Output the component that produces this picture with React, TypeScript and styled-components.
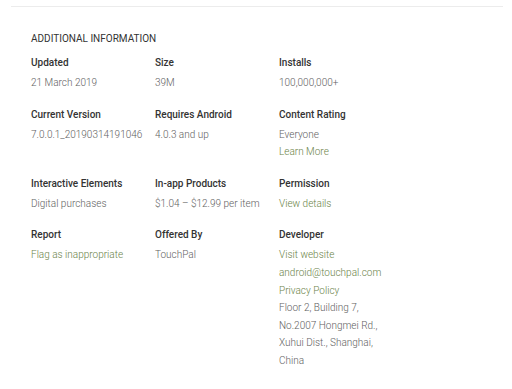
import styled, { createGlobalStyle } from "styled-components";

interface I_InfoItem {
    Label: string;
    Values: { Text: string; Link?: boolean }[];
}

const GlobalStyle = createGlobalStyle`
    body {
        margin: 0;
        background-color: #ffffff;
        font-family: Roboto, "Liberation Sans", Arial, sans-serif;
    }
`;

const Page = styled.div`
    padding: 6px 9px 0px 11px;
`;

const Section = styled.section`
    border-top: 1px solid #ececec;
    padding: 25px 20px 20px 20px;
`;

const Heading = styled.h2`
    margin: 0 0 10px 0;
    font-size: 10px;
    line-height: 14px;
    font-weight: 400;
    color: #333333;
    text-transform: uppercase;
`;

const InfoGrid = styled.div`
    display: grid;
    grid-template-columns: repeat(3, 124px);
    row-gap: 16px;
`;

const InfoCell = styled.div`
    display: flex;
    flex-direction: column;
`;

const Label = styled.div`
    font-size: 10px;
    line-height: 14px;
    font-weight: 500;
    color: #333333;
    margin-bottom: 4px;
`;

const Value = styled.div<{ $link?: boolean }>`
    font-size: 10px;
    line-height: 17.6px;
    font-weight: 300;
    color: ${(props) => (props.$link ? "#6b8348" : "#616161")};
    white-space: nowrap;
`;

const InfoItems: I_InfoItem[] = [
    { Label: "Updated", Values: [{ Text: "21 March 2019" }] },
    { Label: "Size", Values: [{ Text: "39M" }] },
    { Label: "Installs", Values: [{ Text: "100,000,000+" }] },
    { Label: "Current Version", Values: [{ Text: "7.0.0.1_20190314191046" }] },
    { Label: "Requires Android", Values: [{ Text: "4.0.3 and up" }] },
    {
        Label: "Content Rating",
        Values: [{ Text: "Everyone" }, { Text: "Learn More", Link: true }],
    },
    { Label: "Interactive Elements", Values: [{ Text: "Digital purchases" }] },
    { Label: "In-app Products", Values: [{ Text: "$1.04 – $12.99 per item" }] },
    { Label: "Permission", Values: [{ Text: "View details", Link: true }] },
    { Label: "Report", Values: [{ Text: "Flag as inappropriate", Link: true }] },
    { Label: "Offered By", Values: [{ Text: "TouchPal" }] },
    {
        Label: "Developer",
        Values: [
            { Text: "Visit website", Link: true },
            { Text: "android@touchpal.com", Link: true },
            { Text: "Privacy Policy", Link: true },
            { Text: "Floor 2, Building 7," },
            { Text: "No.2007 Hongmei Rd.," },
            { Text: "Xuhui Dist., Shanghai," },
            { Text: "China" },
        ],
    },
];

export default function App() {
    return (
        <>
            <GlobalStyle />
            <Page>
                <Section>
                    <Heading>Additional Information</Heading>
                    <InfoGrid>
                        {InfoItems.map((item) => (
                            <InfoCell key={item.Label}>
                                <Label>{item.Label}</Label>
                                {item.Values.map((value) => (
                                    <Value key={value.Text} $link={value.Link}>
                                        {value.Text}
                                    </Value>
                                ))}
                            </InfoCell>
                        ))}
                    </InfoGrid>
                </Section>
            </Page>
        </>
    );
}
